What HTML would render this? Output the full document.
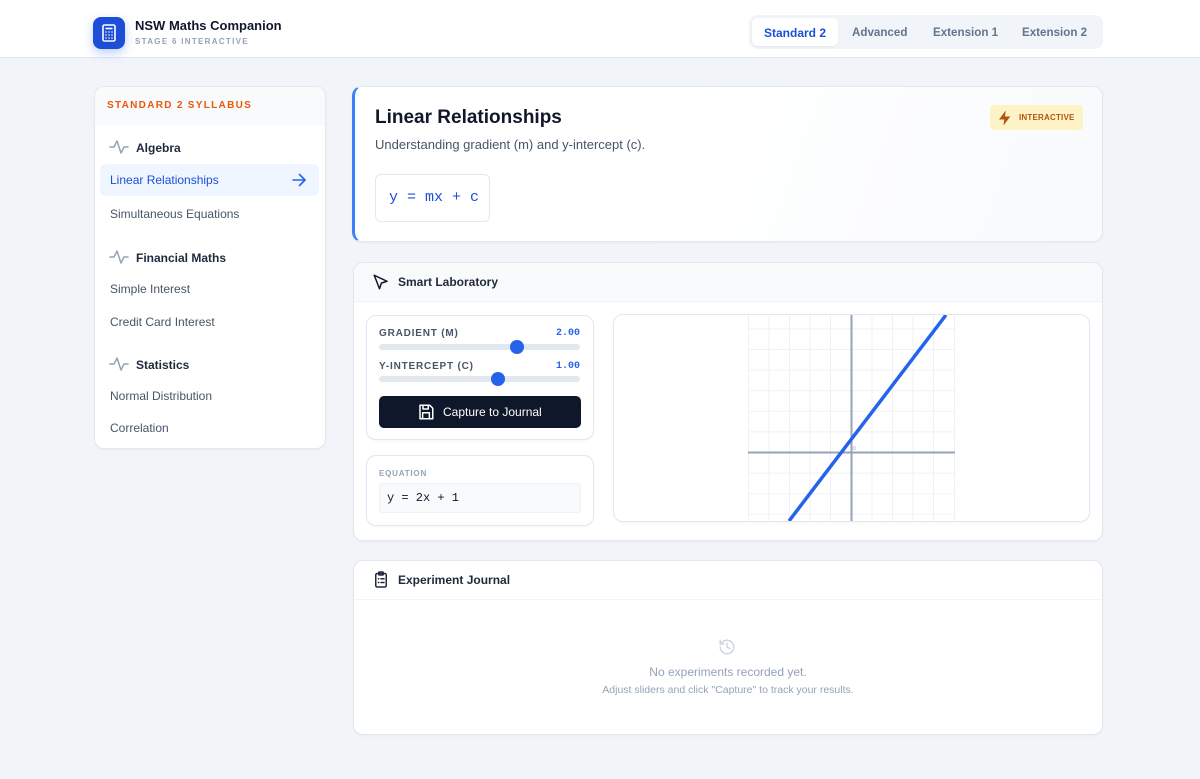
<!DOCTYPE html>
<html><head><meta charset="utf-8"><style>
*{box-sizing:border-box;margin:0;padding:0}
body{width:1200px;height:779px;background:#f1f5f9;font-family:"Liberation Sans",sans-serif;position:relative;overflow:hidden;color:#0f172a}
.a{position:absolute}
.card{position:absolute;background:#fff;border:1px solid #e2e8f0;border-radius:10px;box-shadow:0 1px 2px rgba(0,0,0,.04);overflow:hidden}
.mono{font-family:"Liberation Mono",monospace}
.side{font-size:12px;color:#475569}
.grp{font-size:12px;font-weight:bold;color:#1e293b}
.lbl{font-size:10px;font-weight:bold;color:#475569;letter-spacing:.8px}
</style></head><body>
<div class="a" style="left:0;top:0;width:1200px;height:58px;background:#fff;border-bottom:1px solid #e2e8f0"></div>
<div class="a" style="left:93px;top:17px;width:32px;height:32px;border-radius:8px;background:#1d4ed8;box-shadow:0 4px 10px rgba(37,99,235,.3)">
<svg width="32" height="32" viewBox="0 0 32 32" fill="none" stroke="#fff" stroke-width="1.6"><rect x="10" y="8" width="12" height="16" rx="1.5"/><line x1="12.5" y1="11.5" x2="19.5" y2="11.5"/><g stroke-width="1.8"><line x1="12.5" y1="15" x2="13.5" y2="15"/><line x1="15.5" y1="15" x2="16.5" y2="15"/><line x1="18.5" y1="15" x2="19.5" y2="15"/><line x1="12.5" y1="18" x2="13.5" y2="18"/><line x1="15.5" y1="18" x2="16.5" y2="18"/><line x1="18.5" y1="18" x2="19.5" y2="18"/><line x1="12.5" y1="21" x2="13.5" y2="21"/><line x1="15.5" y1="21" x2="16.5" y2="21"/><line x1="18.5" y1="21" x2="19.5" y2="21"/></g></svg></div>
<div class="a" style="left:135px;top:18px;font-size:13px;font-weight:bold">NSW Maths Companion</div>
<div class="a" style="left:135px;top:37px;font-size:8px;font-weight:bold;letter-spacing:1.3px;color:#94a3b8">STAGE 6 INTERACTIVE</div>
<div class="a" style="left:749px;top:15px;width:354px;height:34px;background:#f1f5f9;border-radius:8px"></div>
<div class="a" style="left:752px;top:18px;width:86px;height:28px;background:#fff;border-radius:6px;box-shadow:0 1px 2px rgba(0,0,0,.06)"></div>
<div class="a" style="left:764px;top:26px;font-size:12px;font-weight:bold;color:#1d4ed8">Standard 2</div>
<div class="a" style="left:852px;top:26px;font-size:11.6px;font-weight:bold;color:#64748b">Advanced</div>
<div class="a" style="left:933px;top:26px;font-size:11.6px;font-weight:bold;color:#64748b">Extension 1</div>
<div class="a" style="left:1022px;top:26px;font-size:11.6px;font-weight:bold;color:#64748b">Extension 2</div>

<div class="card" style="left:94px;top:86px;width:232px;height:363px">
<div style="height:39px;background:#f8fafc"></div></div>
<div class="a" style="left:107px;top:100px;font-size:10px;font-weight:bold;letter-spacing:1.3px;color:#ea580c">STANDARD 2 SYLLABUS</div>
<svg class="a" style="left:109px;top:139px" width="20" height="16" viewBox="0 0 20 16" fill="none" stroke="#94a3b8" stroke-width="1.5" stroke-linejoin="round" stroke-linecap="round"><polyline points="1,8 5,8 8,2 12,14 15,8 19,8"/></svg>
<div class="a grp" style="left:136px;top:141px">Algebra</div>
<div class="a" style="left:100px;top:164px;width:219px;height:32px;background:#eff6ff;border-radius:6px"></div>
<div class="a" style="left:110px;top:173px;font-size:12px;color:#1d4ed8">Linear Relationships</div>
<svg class="a" style="left:291px;top:172px" width="16" height="16" viewBox="0 0 16 16" fill="none" stroke="#2563eb" stroke-width="1.6" stroke-linecap="round" stroke-linejoin="round"><line x1="2" y1="8" x2="14" y2="8"/><polyline points="8.5,2.5 14,8 8.5,13.5"/></svg>
<div class="a side" style="left:110px;top:207px">Simultaneous Equations</div>
<svg class="a" style="left:109px;top:249px" width="20" height="16" viewBox="0 0 20 16" fill="none" stroke="#94a3b8" stroke-width="1.5" stroke-linejoin="round" stroke-linecap="round"><polyline points="1,8 5,8 8,2 12,14 15,8 19,8"/></svg>
<div class="a grp" style="left:136px;top:251px">Financial Maths</div>
<div class="a side" style="left:110px;top:282px">Simple Interest</div>
<div class="a side" style="left:110px;top:315px">Credit Card Interest</div>
<svg class="a" style="left:109px;top:356px" width="20" height="16" viewBox="0 0 20 16" fill="none" stroke="#94a3b8" stroke-width="1.5" stroke-linejoin="round" stroke-linecap="round"><polyline points="1,8 5,8 8,2 12,14 15,8 19,8"/></svg>
<div class="a grp" style="left:136px;top:358px">Statistics</div>
<div class="a side" style="left:110px;top:389px">Normal Distribution</div>
<div class="a side" style="left:110px;top:421px">Correlation</div>

<div class="card" style="left:352px;top:86px;width:751px;height:156px;border-left:3px solid #3b82f6;background:linear-gradient(110deg,#fff 40%,#f8fafc)"></div>
<div class="a" style="left:375px;top:107px;font-size:19px;font-weight:bold">Linear Relationships</div>
<div class="a" style="left:375px;top:137px;font-size:13px;color:#475569">Understanding gradient (m) and y-intercept (c).</div>
<div class="a mono" style="left:375px;top:174px;width:115px;height:48px;background:#fff;border:1px solid #e2e8f0;border-radius:6px;font-size:15px;color:#1d4ed8;line-height:46px;padding-left:13px">y = mx + c</div>
<div class="a" style="left:990px;top:105px;width:93px;height:25px;background:#fef3c7;border-radius:4px"></div>
<svg class="a" style="left:996px;top:109px" width="18" height="18" viewBox="0 0 24 24" fill="#b45309"><path d="M13 2L4 14h7l-1 8 9-12h-7z"/></svg>
<div class="a" style="left:1019px;top:113px;font-size:8px;font-weight:bold;letter-spacing:.2px;color:#b45309">INTERACTIVE</div>

<div class="card" style="left:353px;top:262px;width:750px;height:279px"><div style="height:39px;background:#f8fafc;border-bottom:1px solid #eef2f6"></div></div>
<svg class="a" style="left:372px;top:273px" width="18" height="18" viewBox="0 0 24 24" fill="none" stroke="#0f172a" stroke-width="2" stroke-linejoin="round"><path d="M3 3l7 18 2.5-7.5L20 11z"/></svg>
<div class="a" style="left:398px;top:275px;font-size:12px;font-weight:bold;color:#1e293b">Smart Laboratory</div>
<div class="card" style="left:366px;top:315px;width:228px;height:125px"></div>
<div class="a lbl" style="left:379px;top:328px">GRADIENT (M)</div>
<div class="a mono" style="left:556px;top:328px;font-size:10px;font-weight:bold;color:#2563eb">2.00</div>
<div class="a" style="left:379px;top:344px;width:201px;height:6px;background:#e2e8f0;border-radius:3px"></div>
<div class="a" style="left:510px;top:340px;width:14px;height:14px;background:#2563eb;border-radius:50%"></div>
<div class="a lbl" style="left:379px;top:361px">Y-INTERCEPT (C)</div>
<div class="a mono" style="left:556px;top:361px;font-size:10px;font-weight:bold;color:#2563eb">1.00</div>
<div class="a" style="left:379px;top:376px;width:201px;height:6px;background:#e2e8f0;border-radius:3px"></div>
<div class="a" style="left:491px;top:372px;width:14px;height:14px;background:#2563eb;border-radius:50%"></div>
<div class="a" style="left:379px;top:396px;width:202px;height:32px;background:#0f172a;border-radius:5px"></div>
<svg class="a" style="left:417px;top:403px" width="18" height="18" viewBox="0 0 24 24" fill="none" stroke="#fff" stroke-width="2" stroke-linejoin="round"><path d="M4 3h13l4 4v14H4z"/><path d="M8 3v5h7V3"/><rect x="7.5" y="13" width="9" height="8"/></svg>
<div class="a" style="left:443px;top:405px;font-size:12px;color:#fff">Capture to Journal</div>
<div class="card" style="left:366px;top:455px;width:228px;height:71px"></div>
<div class="a" style="left:379px;top:469px;font-size:8px;font-weight:bold;letter-spacing:.8px;color:#94a3b8">EQUATION</div>
<div class="a mono" style="left:379px;top:483px;width:202px;height:30px;background:#f8fafc;border:1px solid #eef2f6;border-radius:3px;font-size:12px;line-height:28px;padding-left:7px">y = 2x + 1</div>
<div class="card" style="left:613px;top:314px;width:477px;height:208px"></div>
<svg class="a" style="left:748px;top:315px" width="207" height="206" viewBox="0 0 207 206">
<g stroke="#eef2f7" stroke-width="1">
<line x1="0.5" y1="0" x2="0.5" y2="206"/><line x1="21" y1="0" x2="21" y2="206"/><line x1="41.5" y1="0" x2="41.5" y2="206"/><line x1="62" y1="0" x2="62" y2="206"/><line x1="82.5" y1="0" x2="82.5" y2="206"/><line x1="124" y1="0" x2="124" y2="206"/><line x1="144.5" y1="0" x2="144.5" y2="206"/><line x1="165" y1="0" x2="165" y2="206"/><line x1="185.5" y1="0" x2="185.5" y2="206"/><line x1="206.5" y1="0" x2="206.5" y2="206"/>
<line x1="0" y1="13.9" x2="207" y2="13.9"/><line x1="0" y1="34.5" x2="207" y2="34.5"/><line x1="0" y1="55.1" x2="207" y2="55.1"/><line x1="0" y1="75.7" x2="207" y2="75.7"/><line x1="0" y1="96.3" x2="207" y2="96.3"/><line x1="0" y1="116.9" x2="207" y2="116.9"/><line x1="0" y1="158.1" x2="207" y2="158.1"/><line x1="0" y1="178.7" x2="207" y2="178.7"/><line x1="0" y1="199.3" x2="207" y2="199.3"/>
</g>
<line x1="103.5" y1="0" x2="103.5" y2="206" stroke="#94a3b8" stroke-width="2"/>
<line x1="0" y1="137.5" x2="207" y2="137.5" stroke="#94a3b8" stroke-width="2"/>
<text x="105" y="135" font-size="5" fill="#94a3b8" font-family="Liberation Sans">0</text>
<line x1="41" y1="206" x2="198" y2="0" stroke="#2563eb" stroke-width="3.5"/>
</svg>

<div class="card" style="left:353px;top:560px;width:750px;height:175px"><div style="height:39px;border-bottom:1px solid #f1f5f9"></div></div>
<svg class="a" style="left:372px;top:570px" width="18" height="19" viewBox="0 0 24 24" fill="none" stroke="#1e293b" stroke-width="2" stroke-linecap="round" stroke-linejoin="round"><rect x="5" y="4" width="14" height="18" rx="2"/><rect x="9" y="2" width="6" height="4" rx="1"/><line x1="8.5" y1="11" x2="9" y2="11"/><line x1="12" y1="11" x2="16" y2="11"/><line x1="8.5" y1="16" x2="9" y2="16"/><line x1="12" y1="16" x2="16" y2="16"/></svg>
<div class="a" style="left:398px;top:573px;font-size:12px;font-weight:bold;color:#1e293b">Experiment Journal</div>
<svg class="a" style="left:718px;top:638px" width="18" height="18" viewBox="0 0 24 24" fill="none" stroke="#cbd5e1" stroke-width="2" stroke-linecap="round" stroke-linejoin="round"><path d="M3 12a9 9 0 1 0 3-6.7L3 8"/><path d="M3 3v5h5"/><path d="M12 7v5l4 2"/></svg>
<div class="a" style="left:353px;top:665px;width:750px;text-align:center;font-size:12px;color:#94a3b8">No experiments recorded yet.</div>
<div class="a" style="left:353px;top:684px;width:750px;text-align:center;font-size:10.5px;color:#94a3b8">Adjust sliders and click "Capture" to track your results.</div>
</body></html>
